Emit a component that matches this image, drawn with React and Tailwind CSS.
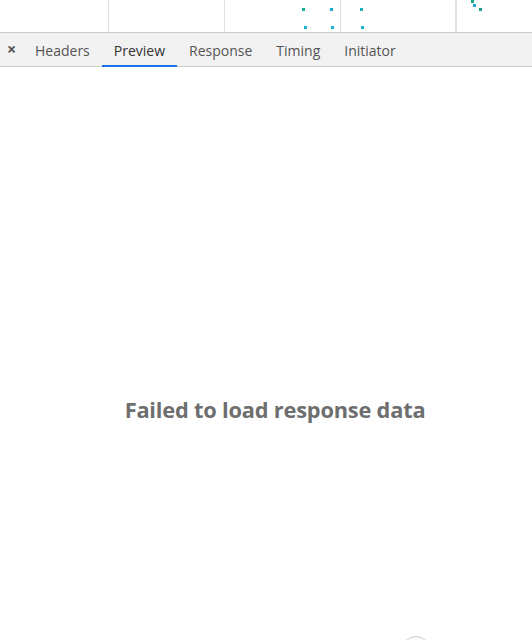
import React from 'react';

const tabs = ['Headers', 'Preview', 'Response', 'Timing', 'Initiator'];

// waterfall specks in the strip above the tabs
const dots = [
  { x: 302, y: 8, c: 'bg-[#14b39a]' },
  { x: 330, y: 8, c: 'bg-[#17a9d6]' },
  { x: 304, y: 26, c: 'bg-[#1bb3d8]' },
  { x: 331, y: 26, c: 'bg-[#1bb3d8]' },
  { x: 360, y: 8, c: 'bg-[#19b2b9]' },
  { x: 361, y: 26, c: 'bg-[#1bb3d8]' },
  { x: 471, y: 0, c: 'bg-[#18a98f]' },
  { x: 473, y: 4, c: 'bg-[#17a9d6]' },
  { x: 479, y: 8, c: 'bg-[#1a9f8c]' },
];

const App = () => {
  return (
    <div
      className="w-[532px] h-[640px] overflow-hidden bg-white flex flex-col relative"
      style={{ fontFamily: '"Open Sans", "Noto Sans", sans-serif' }}
    >
      {/* network grid strip */}
      <div className="h-[33px] shrink-0 flex border-b border-[#cbcbcb] relative">
        <div className="w-[109px] border-r border-[#e0e0e0]" />
        <div className="w-[116px] border-r border-[#e0e0e0]" />
        <div className="w-[116px] border-r border-[#e0e0e0]" />
        <div className="w-[116px] border-r-2 border-[#e0e0e0]" />
        <div className="flex-1" />
        {dots.map((d, i) => (
          <div
            key={i}
            className={`absolute w-[3px] h-[3px] ${d.c}`}
            style={{ left: d.x, top: d.y }}
          />
        ))}
      </div>

      {/* tab bar */}
      <div className="h-[34px] shrink-0 flex items-stretch bg-[#f2f2f2] border-b border-[#cbcbcb] text-[14px] text-[#555]">
        <div className="w-[23px] flex items-center justify-center text-[#555] text-[16px] font-bold pb-[1px]">×</div>
        {tabs.map((t) => (
          <div
            key={t}
            className={`flex items-center px-[12px] pt-[1px] relative ${t === 'Preview' ? 'text-[#333]' : ''}`}
          >
            {t}
            {t === 'Preview' && (
              <div className="absolute left-0 right-0 bottom-[-1px] h-[2px] bg-[#1a73e8]" />
            )}
          </div>
        ))}
      </div>

      {/* preview body */}
      <div className="flex justify-center pt-[327px] pl-[18px]">
        <div className="text-[21.8px] font-bold text-[#6e6e6e] tracking-[-0.2px]">Failed to load response data</div>
      </div>

      <div className="absolute left-[402px] top-[636px] w-[28px] h-[28px] rounded-full border border-[#c8c8c8]" />
    </div>
  );
};

export default App;
